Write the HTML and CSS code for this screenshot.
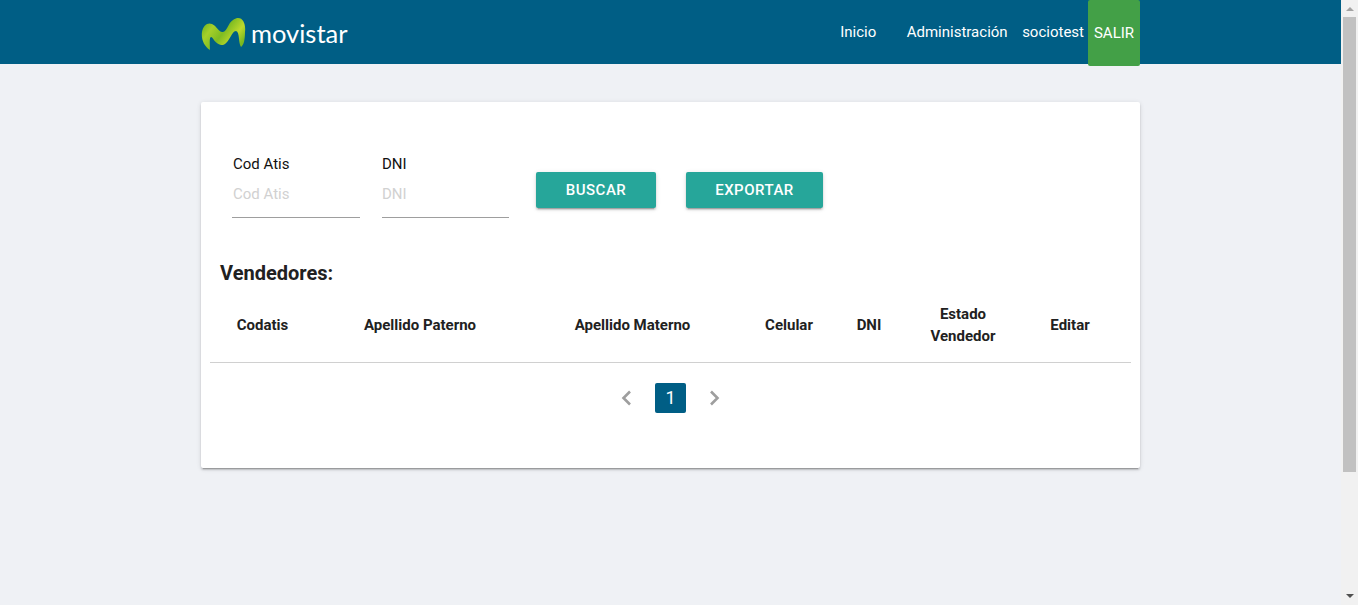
FILE: index.html
```html
<!DOCTYPE html>
<html lang="en">
<head>
    <meta charset="UTF-8" />
    <meta name="viewport" content="width=device-width, initial-scale=1.0" />
    <title>Vendedores</title>
    <link rel="stylesheet" href="styles.css">
</head>
<body>
    <div class="page">
        <div class="main">
            <header class="navbar">
                <div class="navbar-inner">
                    <a class="brand">
                        <svg class="brand-m" width="46" height="34" viewBox="0 0 46 34">
                            <defs>
                                <linearGradient id="mGreen" x1="0" y1="0" x2="1" y2="0.6">
                                    <stop offset="0" stop-color="#5aa81e" />
                                    <stop offset="0.3" stop-color="#a6d02a" />
                                    <stop offset="0.55" stop-color="#7fbc22" />
                                    <stop offset="0.8" stop-color="#bcd92c" />
                                    <stop offset="1" stop-color="#7ab820" />
                                </linearGradient>
                            </defs>
                            <path fill="url(#mGreen)" d="M10 33C4 29 1 22 2 15 3 8 8 5 12 7c5 2 7 9 11 8 5-1 5-12 14-14 6-1 9 6 8 14 0 7-1 13-4 15-3-5-1-15-5-16-5 0-7 15-15 14-6-1-8-8-10-8-2 0-1 9-1 15z" />
                        </svg>
                        <span class="brand-name">movistar</span>
                    </a>
                    <nav class="nav-links">
                        <a class="nav-link nav-link-wide">Inicio</a>
                        <a class="nav-link">Administración</a>
                        <span class="nav-user">sociotest</span>
                        <a class="nav-exit">SALIR</a>
                    </nav>
                </div>
            </header>

            <div class="card">
                <form class="search">
                    <div class="field">
                        <label for="codAtis">Cod Atis</label>
                        <input id="codAtis" type="text" placeholder="Cod Atis" />
                    </div>
                    <div class="field field-dni">
                        <label for="dni">DNI</label>
                        <input id="dni" type="text" placeholder="DNI" />
                    </div>
                    <button type="button" class="btn btn-search">BUSCAR</button>
                    <button type="button" class="btn btn-export">EXPORTAR</button>
                </form>

                <h2 class="title">Vendedores:</h2>

                <table class="sellers">
                    <thead>
                        <tr>
                            <th class="col-code">Codatis</th>
                            <th class="col-father">Apellido Paterno</th>
                            <th class="col-mother">Apellido Materno</th>
                            <th class="col-phone">Celular</th>
                            <th class="col-dni">DNI</th>
                            <th class="col-state">Estado Vendedor</th>
                            <th class="col-edit">Editar</th>
                        </tr>
                    </thead>
                </table>

                <div class="pagination">
                    <svg class="chevron" width="12" height="16" viewBox="0 0 12 16">
                        <path d="M10 1.5L3.5 8l6.5 6.5" />
                    </svg>
                    <span class="page-current">1</span>
                    <svg class="chevron" width="12" height="16" viewBox="0 0 12 16">
                        <path d="M2 1.5L8.5 8 2 14.5" />
                    </svg>
                </div>
            </div>
        </div>

        <div class="scrollbar">
            <span class="arrow-up"></span>
            <div class="thumb"></div>
            <span class="arrow-down"></span>
        </div>
    </div>
</body>
</html>
```

FILE: styles.css
```css
html,
body {
    height: 100%;
    margin: 0;
    overflow: hidden;
}

body {
    font-family: Roboto, Arial, sans-serif;
    font-size: 15px;
    color: #212121;
    background-color: #eff1f5;
}

.page {
    display: flex;
    height: 605px;
}

.main {
    flex: 1;
    min-width: 0;
}

/* header */
.navbar {
    height: 64px;
    background-color: #005e85;
}

.navbar-inner {
    width: 939px;
    margin: 0 auto;
    display: flex;
    justify-content: space-between;
    align-items: flex-start;
}

.brand {
    display: flex;
    align-items: center;
    height: 64px;
}

.brand-m {
    margin-top: 4px;
    margin-left: -1px;
}

.brand-name {
    margin-left: 5px;
    margin-top: 1px;
    font-family: Lato, sans-serif;
    font-size: 25.5px;
    color: white;
}

.nav-links {
    display: flex;
    align-items: flex-start;
    color: white;
    line-height: 65px;
}

.nav-link {
    margin-right: 14.5px;
}

.nav-link-wide {
    margin-right: 30.5px;
}

.nav-user {
    margin-right: 4px;
}

.nav-exit {
    width: 52px;
    height: 66px;
    line-height: 67px;
    text-align: center;
    background-color: #43a047;
    border-radius: 2px;
}

/* card */
.card {
    width: 939px;
    height: 366px;
    margin: 38px auto 0;
    background: white;
    border-radius: 2px;
    box-shadow: 0 2px 2px 0 rgba(0, 0, 0, 0.14), 0 1px 5px 0 rgba(0, 0, 0, 0.12), 0 3px 1px -2px rgba(0, 0, 0, 0.2);
}

.search {
    display: flex;
    align-items: flex-start;
    padding: 53px 0 0 31px;
}

.field {
    display: flex;
    flex-direction: column;
    width: 128px;
}

.field-dni {
    width: 127px;
    margin-left: 22px;
}

.field label {
    margin-left: 1px;
    line-height: 18px;
    color: #111;
}

.field-dni label {
    margin-left: 0;
}

.field input {
    height: 42px;
    margin: 0;
    padding: 0 0 2px;
    border: none;
    border-bottom: 1px solid #9e9e9e;
    outline: none;
    font-family: inherit;
    font-size: 15px;
    box-sizing: content-box;
    text-indent: 1px;
}

.field-dni input {
    text-indent: 0;
}

.field input::placeholder {
    color: #d1d1d1;
    opacity: 1;
}

.btn {
    height: 36px;
    margin-top: 17px;
    padding: 0;
    border: none;
    border-radius: 2px;
    background-color: #26a69a;
    color: white;
    font-family: inherit;
    font-size: 15px;
    font-weight: 500;
    letter-spacing: 0.5px;
    box-shadow: 0 2px 2px 0 rgba(0, 0, 0, 0.14), 0 1px 5px 0 rgba(0, 0, 0, 0.12), 0 3px 1px -2px rgba(0, 0, 0, 0.2);
}

.btn-search {
    width: 120px;
    margin-left: 27px;
}

.btn-export {
    width: 137px;
    margin-left: 30px;
}

.title {
    margin: 42px 0 0 19px;
    font-size: 20px;
    line-height: 26px;
    font-weight: 700;
    color: #212121;
}

/* table */
.sellers {
    width: 921px;
    margin: 12px 0 0 9px;
    border-collapse: collapse;
    table-layout: fixed;
}

.sellers th {
    height: 54px;
    padding: 0 0 10px;
    border-bottom: 1px solid #d0d0d0;
    font-size: 15px;
    font-weight: 700;
    line-height: 22px;
    text-align: center;
}

.col-code { width: 105px; }
.col-father { width: 210px; }
.col-mother { width: 215px; }
.col-phone { width: 98px; }
.col-dni { width: 62px; }
.sellers th.col-edit { padding-right: 17px; }

.sellers th.col-state {
    width: 66px;
    padding: 0 30px 10px;
}

/* pagination */
.pagination {
    display: flex;
    justify-content: center;
    align-items: center;
    margin-top: 20px;
}

.chevron {
    fill: none;
    stroke: #9e9e9e;
    stroke-width: 2.6;
}

.page-current {
    width: 31px;
    height: 30px;
    margin: 0 23px;
    line-height: 30px;
    text-align: center;
    font-size: 18px;
    color: white;
    background-color: #005e85;
    border-radius: 2px;
}

/* scrollbar */
.scrollbar {
    width: 17px;
    height: 605px;
    display: flex;
    flex-direction: column;
    align-items: center;
    background-color: #f1f1f1;
}

.thumb {
    width: 13px;
    height: 455px;
    background-color: #c1c1c1;
}

.arrow-up {
    width: 0;
    height: 0;
    margin: 7px 0 6px;
    border-left: 4px solid transparent;
    border-right: 4px solid transparent;
    border-bottom: 4px solid #a3a3a3;
}

.arrow-down {
    width: 0;
    height: 0;
    margin-top: auto;
    margin-bottom: 7px;
    border-left: 4px solid transparent;
    border-right: 4px solid transparent;
    border-top: 4px solid #505050;
}
```
